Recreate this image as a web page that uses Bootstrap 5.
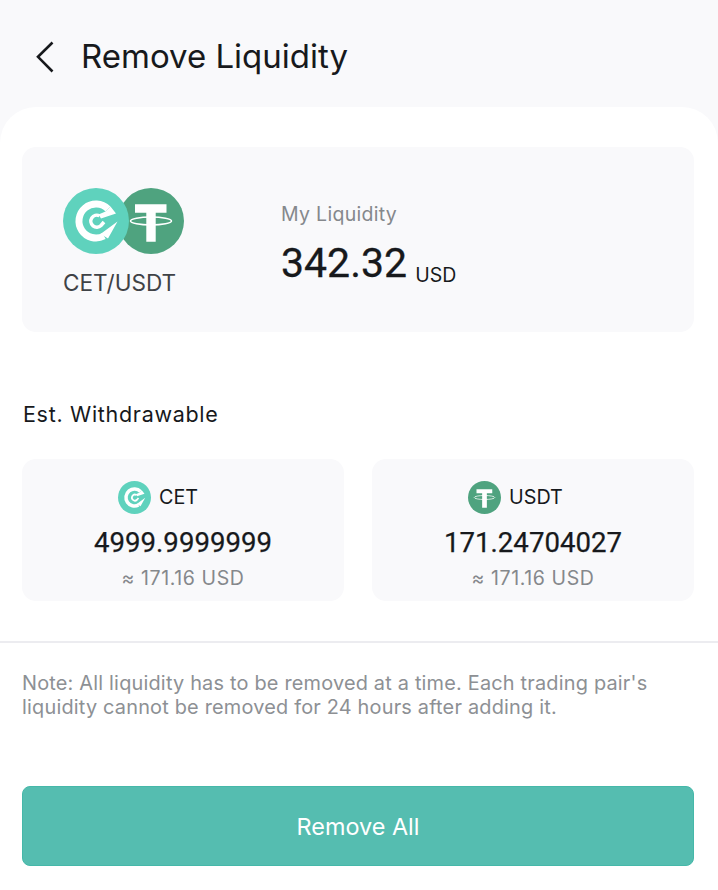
<!DOCTYPE html>
<html lang="en">
<head>
  <meta charset="UTF-8" />
  <meta name="viewport" content="width=device-width, initial-scale=1.0"/>
  <title>Remove Liquidity</title>
  <link href="https://cdn.jsdelivr.net/npm/bootstrap@5.3.0/dist/css/bootstrap.min.css" rel="stylesheet"/>
  <style>
    body {
      background-color: #f9f9fb;
      font-family: Inter, "Liberation Sans", sans-serif;
      color: #17191c;
      height: 890px;
      overflow: hidden;
    }
    .top-bar {
      height: 107px;
      padding: 6px 0 0 36px;
      gap: 27px;
    }
    .top-title {
      font-size: 33px;
      font-weight: 400;
      margin: 0;
      line-height: 1;
    }
    .sheet {
      background: #fff;
      border-radius: 36px 36px 0 0;
      padding: 40px 24px 0 22px;
      height: 783px;
    }
    .soft-box {
      background: #f9f9fb;
      border-radius: 14px;
    }
    .hero-box {
      height: 185px;
      padding: 5px 0 0 41px;
      gap: 97px;
    }
    .pair-icons {
      width: 121px;
      height: 66px;
    }
    .pair-name {
      font-size: 22.6px;
      line-height: 26px;
      color: #3f4246;
      margin-top: 16px;
    }
    .liq-info {
      margin-top: 17px;
    }
    .liq-label {
      font-size: 19.5px;
      line-height: 24px;
      letter-spacing: 0.3px;
      color: #85888c;
    }
    .liq-value {
      font-family: Roboto, sans-serif;
      font-size: 41px;
      line-height: 48px;
      -webkit-text-stroke: 0.3px #17191c;
      margin-top: 13px;
    }
    .liq-unit {
      font-family: Inter, sans-serif;
      font-size: 19.5px;
      font-weight: 400;
      -webkit-text-stroke: 0;
      margin-left: -2px;
      vertical-align: -5px;
    }
    .est-title {
      font-size: 21.5px;
      line-height: 26px;
      letter-spacing: 0.7px;
      margin: 69px 0 32px 1px;
      font-weight: 400;
    }
    .coin-grid {
      gap: 28px;
    }
    .coin-box {
      height: 142px;
      width: 322px;
      padding-top: 21px;
    }
    .coin-name {
      font-size: 19.8px;
      line-height: 34px;
      gap: 8px;
      padding-left: 96px;
    }
    .coin-amount {
      font-family: Roboto, sans-serif;
      font-size: 27.6px;
      line-height: 34px;
      -webkit-text-stroke: 0.25px #17191c;
      margin-top: 12px;
    }
    .coin-usd {
      font-size: 19.5px;
      line-height: 24px;
      letter-spacing: 0.6px;
      color: #85888c;
      margin-top: 6px;
    }
    .split-line {
      height: 2px;
      background: #ececf0;
      margin: 40px -24px 0 -22px;
    }
    .note-text {
      font-size: 19.9px;
      line-height: 24px;
      letter-spacing: 0.2px;
      color: #8d9094;
      margin: 28px 0 0;
    }
    .remove-btn {
      --bs-btn-bg: #55bdb0;
      --bs-btn-border-color: #45b8a9;
      --bs-btn-color: #fff;
      --bs-btn-hover-bg: #4aa99d;
      --bs-btn-hover-border-color: #4aa99d;
      --bs-btn-hover-color: #fff;
      height: 80px;
      margin-top: 67px;
      padding-top: 8px;
      font-size: 23.4px;
      border-radius: 8px;
    }
  </style>
</head>
<body>

<!-- Coin logos, reused below -->
<svg class="d-none" aria-hidden="true">
  <symbol id="coin-cet" viewBox="0 0 66 66">
    <circle cx="33" cy="33" r="33" fill="#5fd2bd"/>
    <path d="M41 48A17 17 0 1 1 45 21" fill="none" stroke="#fff" stroke-width="7"/>
    <path d="M54.500 33.500 45 50.500 37.500 46Z M47.500 18.500 53 25.500 38 30.500 35.500 26.500 42.500 23.500Z" fill="#fff"/>
    <path d="M36.500 27.800A6 6 0 1 0 38 37.500L41 34" fill="none" stroke="#fff" stroke-width="3.500"/>
  </symbol>
  <symbol id="coin-usdt" viewBox="0 0 66 66">
    <circle cx="33" cy="33" r="33" fill="#4fa37f"/>
    <path d="M17 16.300H48.500V24.700H37.700V53.700H28.300V24.700H17Z" fill="#fff"/>
    <ellipse cx="33" cy="33" rx="20.500" ry="4" fill="none" stroke="#fff" stroke-width="1.500"/>
  </symbol>
</svg>

<!-- Header -->
<div class="top-bar d-flex align-items-center">
  <svg width="18" height="32" viewBox="0 0 18 32" fill="none" stroke="#17191c" stroke-width="2.6" aria-hidden="true"><path d="M16.5 1.5 2 15.800 16.500 30.500"/></svg>
  <h1 class="top-title">Remove Liquidity</h1>
</div>

<!-- Sheet -->
<div class="sheet">
  <section class="soft-box hero-box d-flex align-items-center">
    <div>
      <svg class="pair-icons d-block" viewBox="0 0 121 66" aria-hidden="true">
        <use href="#coin-usdt" x="55" width="66" height="66"/>
        <use href="#coin-cet" width="66" height="66"/>
      </svg>
      <div class="pair-name">CET/USDT</div>
    </div>
    <div class="liq-info">
      <div class="liq-label">My Liquidity</div>
      <div class="liq-value">342.32 <span class="liq-unit">USD</span></div>
    </div>
  </section>

  <h2 class="est-title">Est. Withdrawable</h2>

  <div class="coin-grid d-flex">
    <div class="soft-box coin-box text-center">
      <div class="coin-name d-flex align-items-center">
        <svg width="33" height="33" aria-hidden="true"><use href="#coin-cet"/></svg>
        <span>CET</span>
      </div>
      <div class="coin-amount">4999.9999999</div>
      <div class="coin-usd">≈ 171.16 USD</div>
    </div>
    <div class="soft-box coin-box text-center">
      <div class="coin-name d-flex align-items-center">
        <svg width="33" height="33" aria-hidden="true"><use href="#coin-usdt"/></svg>
        <span>USDT</span>
      </div>
      <div class="coin-amount">171.24704027</div>
      <div class="coin-usd">≈ 171.16 USD</div>
    </div>
  </div>

  <div class="split-line"></div>

  <p class="note-text">Note: All liquidity has to be removed at a time. Each trading pair's liquidity cannot be removed for 24 hours after adding it.</p>

  <button type="button" class="btn remove-btn w-100">Remove All</button>
</div>

<script src="https://cdn.jsdelivr.net/npm/bootstrap@5.3.0/dist/js/bootstrap.bundle.min.js"></script>
</body>
</html>
